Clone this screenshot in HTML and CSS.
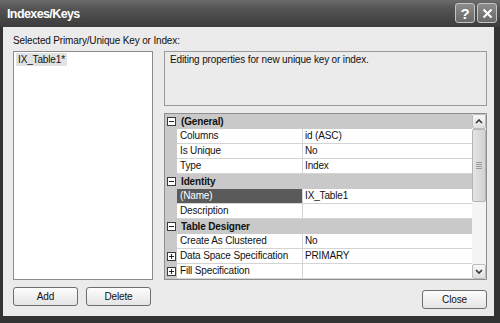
FILE: index.html
```html
<!DOCTYPE html>
<html lang="en">
<head>
    <meta charset="UTF-8">
    <title>Indexes/Keys</title>
    <link rel="stylesheet" href="styles.css">
</head>
<body>
    <div class="window">
        <div class="titlebar">
            <span class="title">Indexes/Keys</span>
            <div class="caption-buttons">
                <span class="cap-btn">?</span>
                <span class="cap-btn">
                    <svg width="11" height="11" viewBox="0 0 11 11"><path d="M1.5 1.5 L9.5 9.5 M9.5 1.5 L1.5 9.5" stroke="#fff" stroke-width="2" fill="none"/></svg>
                </span>
            </div>
        </div>

        <div class="client">
            <div class="caption">Selected Primary/Unique Key or Index:</div>

            <div class="main">
                <div class="keylist">
                    <span class="key selected">IX_Table1*</span>
                </div>

                <div class="side">
                    <div class="desc">Editing properties for new unique key or index.</div>

                    <div class="props">
                        <div class="rows">
                            <div class="row cat"><span class="toggle minus"></span><span class="cat-name">(General)</span></div>
                            <div class="row"><span class="indent"></span><span class="name">Columns</span><span class="value">id (ASC)</span></div>
                            <div class="row"><span class="indent"></span><span class="name">Is Unique</span><span class="value">No</span></div>
                            <div class="row"><span class="indent"></span><span class="name">Type</span><span class="value">Index</span></div>
                            <div class="row cat"><span class="toggle minus"></span><span class="cat-name">Identity</span></div>
                            <div class="row"><span class="indent"></span><span class="name active">(Name)</span><span class="value">IX_Table1</span></div>
                            <div class="row"><span class="indent"></span><span class="name">Description</span><span class="value"></span></div>
                            <div class="row cat"><span class="toggle minus"></span><span class="cat-name">Table Designer</span></div>
                            <div class="row"><span class="indent"></span><span class="name">Create As Clustered</span><span class="value">No</span></div>
                            <div class="row"><span class="indent"><span class="toggle plus"></span></span><span class="name">Data Space Specification</span><span class="value">PRIMARY</span></div>
                            <div class="row"><span class="indent"><span class="toggle plus"></span></span><span class="name">Fill Specification</span><span class="value"></span></div>
                        </div>

                        <div class="scrollbar">
                            <div class="sb-btn">
                                <svg width="8" height="5" viewBox="0 0 8 5"><path d="M1 4 L4 1 L7 4" stroke="#333" stroke-width="1.6" fill="none"/></svg>
                            </div>
                            <div class="sb-thumb"><span class="grip"></span></div>
                            <div class="sb-track"></div>
                            <div class="sb-btn">
                                <svg width="8" height="5" viewBox="0 0 8 5"><path d="M1 1 L4 4 L7 1" stroke="#333" stroke-width="1.6" fill="none"/></svg>
                            </div>
                        </div>
                    </div>
                </div>
            </div>

            <div class="footer">
                <div class="btn-group">
                    <button class="btn">Add</button>
                    <button class="btn">Delete</button>
                </div>
                <button class="btn close-btn">Close</button>
            </div>
        </div>
    </div>
</body>
</html>
```

FILE: styles.css
```css
* {
    box-sizing: border-box;
}
body {
    margin: 0;
    background-color: #2e2e2e;
    font-family: "Liberation Sans", Arial, sans-serif;
    font-size: 10px;
    letter-spacing: -0.15px;
    color: #111;
}
.window {
    width: 500px;
    height: 323px;
    background-color: #333;
    display: flex;
    flex-direction: column;
}
.titlebar {
    height: 27px;
    flex: none;
    display: flex;
    justify-content: space-between;
    align-items: center;
    padding: 0 3px 0 7px;
    background: linear-gradient(#6b6b6b, #555 30%, #464646 70%, #3c3c3c);
}
.title {
    color: white;
    font-weight: bold;
    font-size: 12.5px;
    letter-spacing: -0.6px;
}
.caption-buttons {
    display: flex;
    gap: 2px;
    align-self: flex-start;
    margin-top: 3px;
}
.cap-btn {
    width: 20px;
    height: 20px;
    border: 1px solid #c4c4c4;
    border-radius: 3px;
    background: linear-gradient(#8c8c8c, #6a6a6a);
    color: white;
    display: flex;
    align-items: center;
    justify-content: center;
    font-weight: bold;
    font-size: 15px;
    letter-spacing: 0;
}
.client {
    flex: 1;
    margin: 0 6px 7px 3px;
    padding: 7px 7px 0 10px;
    background-color: #ebebeb;
    display: flex;
    flex-direction: column;
}
.caption {
    line-height: 13px;
    margin-bottom: 4px;
}
.main {
    display: flex;
    gap: 11px;
    height: 229px;
}
.keylist {
    width: 140px;
    background-color: white;
    border: 1px solid #8c8c8c;
    padding: 1px 2px;
}
.key {
    display: inline-block;
    line-height: 13px;
    padding: 0 2px;
}
.key.selected {
    background-color: #e2e2e2;
}
.side {
    flex: 1;
    display: flex;
    flex-direction: column;
    gap: 7px;
}
.desc {
    height: 55px;
    flex: none;
    border: 1px solid #9a9a9a;
    padding: 1px 5px;
    line-height: 13px;
}
.props {
    flex: 1;
    display: flex;
    background-color: white;
    border: 1px solid #8f8f8f;
}
.rows {
    flex: 1;
}
.row {
    display: grid;
    grid-template-columns: 12px 126px 1fr;
    height: 15px;
    line-height: 14px;
}
.row.cat {
    display: flex;
    align-items: center;
    background-color: #c9c9c9;
    padding-left: 2px;
}
.cat-name {
    font-weight: bold;
    margin-left: 5px;
}
.indent {
    background-color: #c9c9c9;
    display: flex;
    align-items: center;
    padding-left: 2px;
}
.name {
    padding-left: 3px;
    border-right: 1px solid #d4d4d4;
    border-bottom: 1px solid #d4d4d4;
    white-space: nowrap;
}
.name.active {
    background-color: #5a5a5a;
    color: white;
}
.value {
    padding-left: 2px;
    border-bottom: 1px solid #d4d4d4;
}
.toggle {
    width: 9px;
    height: 9px;
    flex: none;
    border: 1px solid #3a3a3a;
    background-color: white;
    position: relative;
}
.toggle::before {
    content: "";
    position: absolute;
    left: 1px;
    top: 3px;
    width: 5px;
    height: 1px;
    background-color: #222;
}
.toggle.plus::after {
    content: "";
    position: absolute;
    left: 3px;
    top: 1px;
    width: 1px;
    height: 5px;
    background-color: #222;
}
.scrollbar {
    width: 14px;
    display: flex;
    flex-direction: column;
    background-color: #f4f4f4;
}
.sb-btn {
    height: 15px;
    border: 1px solid #bcbcbc;
    border-radius: 2px;
    background: linear-gradient(#f8f8f8, #dedede);
    display: flex;
    align-items: center;
    justify-content: center;
}
.sb-thumb {
    height: 73px;
    border: 1px solid #b4b4b4;
    border-radius: 2px;
    background: linear-gradient(90deg, #e4e4e4, #d2d2d2);
    display: flex;
    align-items: center;
    justify-content: center;
}
.grip {
    width: 6px;
    height: 7px;
    background: repeating-linear-gradient(#9a9a9a 0 1px, transparent 1px 2px);
}
.sb-track {
    flex: 1;
}
.footer {
    display: flex;
    justify-content: space-between;
    margin-top: 7px;
}
.btn-group {
    display: flex;
    gap: 8px;
}
.btn {
    width: 65px;
    height: 19px;
    font: inherit;
    letter-spacing: inherit;
    color: #111;
    border: 1px solid #6e6e6e;
    border-radius: 3px;
    background: linear-gradient(#fdfdfd, #e4e4e4);
    padding: 0;
}
.close-btn {
    margin-top: 3px;
}
```
